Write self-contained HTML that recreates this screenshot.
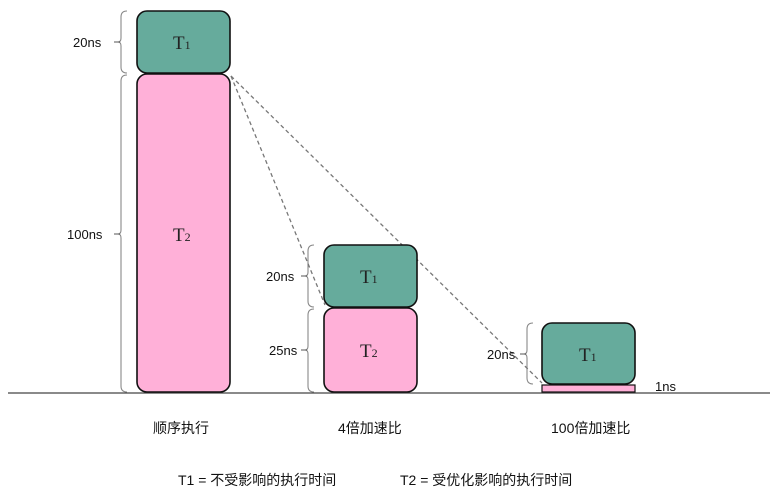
<!DOCTYPE html>
<html><head><meta charset="utf-8"><style>
html,body{margin:0;padding:0;background:#fff;width:779px;height:497px;overflow:hidden}
svg{display:block}
.l{font-family:"Liberation Sans","Noto Sans CJK SC",sans-serif;font-size:13px;fill:#111}
.c{font-size:14px}
.t{font-family:"Liberation Serif",serif;font-size:19px;fill:#222}
.s{font-size:12px}
</style></head><body>
<svg width="779" height="497" viewBox="0 0 779 497">
<g fill="none" stroke="#888" stroke-width="1.1">
<path d="M127,11 Q121,11 121,17 L121,38 Q121,42 118,42 Q121,42 121,46 L121,67 Q121,73 127,73"/>
<path d="M127,75 Q121,75 121,81 L121,230 Q121,234 118,234 Q121,234 121,238 L121,386 Q121,392 127,392"/>
<path d="M314,245 Q308,245 308,251 L308,272 Q308,276 305,276 Q308,276 308,280 L308,301 Q308,307 314,307"/>
<path d="M314,309 Q308,309 308,315 L308,346 Q308,350 305,350 Q308,350 308,354 L308,386 Q308,392 314,392"/>
<path d="M533,323 Q527,323 527,329 L527,350 Q527,354 524,354 Q527,354 527,358 L527,378 Q527,384 533,384"/>
</g>
<g stroke="#555" stroke-width="1">
<line x1="114" y1="42" x2="120" y2="42"/><line x1="114" y1="234" x2="120" y2="234"/>
<line x1="301" y1="276" x2="307" y2="276"/><line x1="301" y1="350" x2="307" y2="350"/>
<line x1="520" y1="354" x2="526" y2="354"/>
</g>
<g stroke="#777" stroke-width="1.3" stroke-dasharray="4,3" fill="none">
<line x1="231" y1="76" x2="325" y2="305"/>
<line x1="231" y1="76" x2="542" y2="383"/>
</g>
<line x1="8" y1="393" x2="770" y2="393" stroke="#444" stroke-width="1.3"/>
<g stroke="#111" stroke-width="1.6">
<rect x="137" y="74" width="93" height="318" rx="10" fill="#ffb0d8"/>
<rect x="137" y="11" width="93" height="62" rx="10" fill="#66ab9c"/>
<rect x="324" y="308" width="93" height="84" rx="10" fill="#ffb0d8"/>
<rect x="324" y="245" width="93" height="62" rx="10" fill="#66ab9c"/>
<rect x="542" y="323" width="93" height="61" rx="10" fill="#66ab9c"/>
<rect x="542" y="385" width="93" height="7" fill="#ffb0d8" stroke-width="1.2"/>
</g>
<text class="t" x="173" y="49">T<tspan class="s">1</tspan></text>
<text class="t" x="173" y="241">T<tspan class="s">2</tspan></text>
<text class="t" x="360" y="283">T<tspan class="s">1</tspan></text>
<text class="t" x="360" y="357">T<tspan class="s">2</tspan></text>
<text class="t" x="579" y="361">T<tspan class="s">1</tspan></text>
<text class="l" x="73" y="47">20ns</text>
<text class="l" x="67" y="239">100ns</text>
<text class="l" x="266" y="281">20ns</text>
<text class="l" x="269" y="355">25ns</text>
<text class="l" x="487" y="359">20ns</text>
<text class="l" x="655" y="391">1ns</text>
<text class="l c" x="153" y="433">顺序执行</text>
<text class="l c" x="338" y="433">4倍加速比</text>
<text class="l c" x="551" y="433">100倍加速比</text>
<text class="l c" x="178" y="485">T1 = 不受影响的执行时间</text>
<text class="l c" x="400" y="485">T2 = 受优化影响的执行时间</text>
</svg>
</body></html>
